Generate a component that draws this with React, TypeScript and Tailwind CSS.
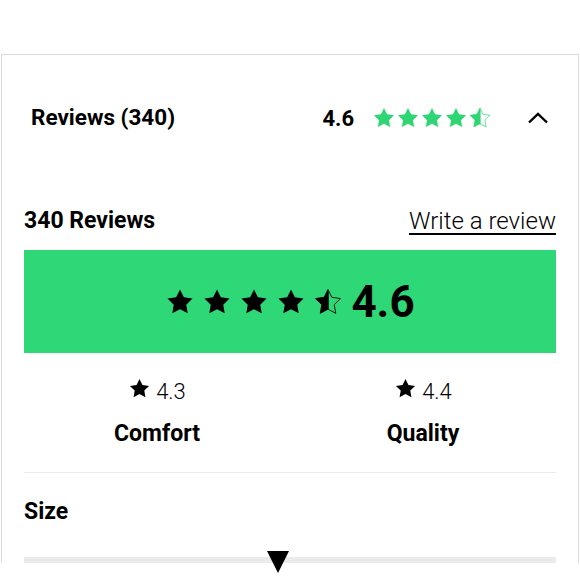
import React from 'react';

const PTS = '12,2 15.09,8.26 22,9.27 17,14.14 18.18,21.02 12,17.77 5.82,21.02 7,14.14 2,9.27 8.91,8.26';

function Star({ size, color, half = false, id }: { size: number; color: string; half?: boolean; id?: string }) {
  if (!half) {
    return (
      <svg width={size} height={size} viewBox="0 0 24 24" className="block shrink-0">
        <polygon points={PTS} fill={color} />
      </svg>
    );
  }
  return (
    <svg width={size} height={size} viewBox="0 0 24 24" className="block shrink-0">
      <defs>
        <clipPath id={id}>
          <rect x="0" y="0" width="12.6" height="24" />
        </clipPath>
      </defs>
      <polygon points={PTS} fill="none" stroke={color} strokeWidth="0.7" strokeLinejoin="round" />
      <polygon points={PTS} fill={color} clipPath={`url(#${id})`} />
    </svg>
  );
}

function Stars({ size, color, gap, prefix }: { size: number; color: string; gap: string; prefix: string }) {
  return (
    <div className={`flex items-center ${gap}`}>
      {[0, 1, 2, 3].map(i => <Star key={i} size={size} color={color} />)}
      <Star size={size} color={color} half id={`${prefix}-half`} />
    </div>
  );
}

const SUBS = [
  { label: 'Comfort', value: '4.3' },
  { label: 'Quality', value: '4.4' },
];

export default function App() {
  return (
    <div className="min-h-[580px] bg-white pt-[54px] px-[1px] font-['Roboto',sans-serif] text-black">
      <div className="border border-[#dcdcdc] border-b-0">
        <div className="h-[126px] pl-[29px] pr-[29px] flex items-center justify-between">
          <span className="text-[22.5px] font-bold">Reviews (340)</span>
          <div className="flex items-center">
            <span className="text-[22px] font-bold mr-[18px]">4.6</span>
            <Stars size={24} color="#2ed573" gap="gap-0" prefix="hdr" />
            <svg width="22" height="12" viewBox="0 0 22 12" className="ml-[35px]">
              <polyline points="2,10.5 11,2 20,10.5" fill="none" stroke="#000" strokeWidth="2.4" />
            </svg>
          </div>
        </div>

        <div className="px-[22px] pt-[22px]">
          <div className="flex items-center justify-between">
            <span className="text-[23px] font-bold">340 Reviews</span>
            <a className="text-[24px] font-light underline underline-offset-[4px] decoration-[1.5px]">Write a review</a>
          </div>

          <div className="mt-[11px] h-[103px] bg-[#2ed876] flex items-center justify-center">
            <Stars size={30} color="#000" gap="gap-[7px]" prefix="big" />
            <span className="ml-[8px] text-[44px] font-bold leading-none">4.6</span>
          </div>

          <div className="grid grid-cols-2 pt-[16px] pb-[20px] border-b border-[#ececec]">
            {SUBS.map(s => (
              <div key={s.label} className="flex flex-col items-center">
                <div className="flex items-center gap-[5px]">
                  <Star size={23} color="#000" />
                  <span className="text-[22px] font-light mt-[8px] leading-[30px]">{s.value}</span>
                </div>
                <span className="mt-[10px] text-[23px] font-bold">{s.label}</span>
              </div>
            ))}
          </div>

          <div className="pt-[22px]">
            <span className="text-[23px] font-bold">Size</span>
          </div>

          <div className="relative mt-[28px] h-[6px] bg-[#ebebeb]">
            <svg width="22" height="22" viewBox="0 0 22 22" className="absolute left-[243px] top-[-6px]">
              <polygon points="0,0 22,0 11,22" fill="#000" />
            </svg>
          </div>
        </div>
      </div>
    </div>
  );
}
